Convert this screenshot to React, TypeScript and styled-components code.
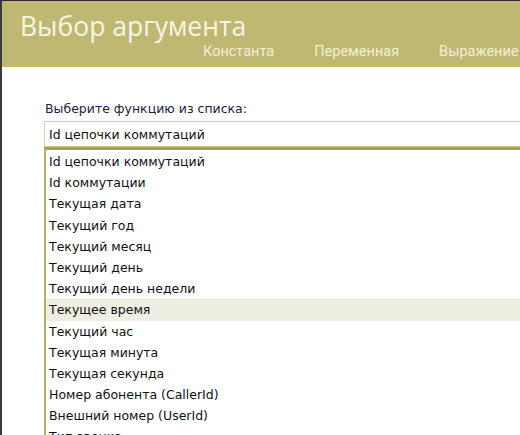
import styled, { createGlobalStyle } from "styled-components";

const Global = createGlobalStyle`
    html, body {
        margin: 0;
        padding: 0;
        background: #ffffff;
        overflow: hidden;
    }
`;

const Window = styled.div`
    width: 640px;
    height: 435px;
    border-top: 1px solid #2a2a2a;
    border-left: 2px solid #3a3a3a;
    box-sizing: border-box;
    background: #ffffff;
    overflow: hidden;
`;

const Header = styled.div`
    height: 66px;
    background-color: #bfb873;
    display: flex;
    flex-direction: column;
    box-sizing: border-box;
    padding: 8px 0 0 18px;
`;

const Title = styled.h1`
    margin: 0;
    font-family: "Open Sans", "Liberation Sans", sans-serif;
    font-weight: 400;
    font-size: 26.5px;
    line-height: 34px;
    color: #f7f5e4;
`;

const Tabs = styled.div`
    display: flex;
    column-gap: 40px;
    margin-left: 183px;
    margin-top: 0;
`;

const Tab = styled.span`
    font-family: "Roboto", "Liberation Sans", sans-serif;
    font-size: 14.5px;
    line-height: 18px;
    color: #f2efd6;
`;

const Body = styled.div`
    padding: 34px 0 0 42px;
    font-family: "DejaVu Sans", "Liberation Sans", sans-serif;
`;

const Label = styled.div`
    font-size: 12.5px;
    line-height: 15px;
    color: #1c1c3c;
    margin-bottom: 5px;
    padding-left: 1px;
`;

const Combo = styled.div`
    height: 26px;
    border: 1px solid #d6d2a6;
    border-bottom-color: #cfc990;
    box-sizing: border-box;
    display: flex;
    align-items: center;
    padding-left: 4px;
    font-size: 12.5px;
    color: #111111;
`;

const List = styled.div`
    border-top: 3px solid #a8a15c;
    border-left: 2px solid #b5ae66;
    padding-top: 1px;
`;

const Item = styled.div<{ $active?: boolean }>`
    height: 21.2px;
    line-height: 21px;
    padding-left: 3px;
    font-size: 12.5px;
    color: #111111;
    white-space: nowrap;
    background-color: ${(p) => (p.$active ? "#efeee3" : "transparent")};
`;

const items = [
    "Id цепочки коммутаций",
    "Id коммутации",
    "Текущая дата",
    "Текущий год",
    "Текущий месяц",
    "Текущий день",
    "Текущий день недели",
    "Текущее время",
    "Текущий час",
    "Текущая минута",
    "Текущая секунда",
    "Номер абонента (CallerId)",
    "Внешний номер (UserId)",
    "Тип звонка",
];

function App() {
    return (
        <Window>
            <Global />
            <Header>
                <Title>Выбор аргумента</Title>
                <Tabs>
                    <Tab>Константа</Tab>
                    <Tab>Переменная</Tab>
                    <Tab>Выражение</Tab>
                </Tabs>
            </Header>
            <Body>
                <Label>Выберите функцию из списка:</Label>
                <Combo>Id цепочки коммутаций</Combo>
                <List>
                    {items.map((name, i) => (
                        <Item key={name} $active={i === 7}>{name}</Item>
                    ))}
                </List>
            </Body>
        </Window>
    );
}

export default App;
